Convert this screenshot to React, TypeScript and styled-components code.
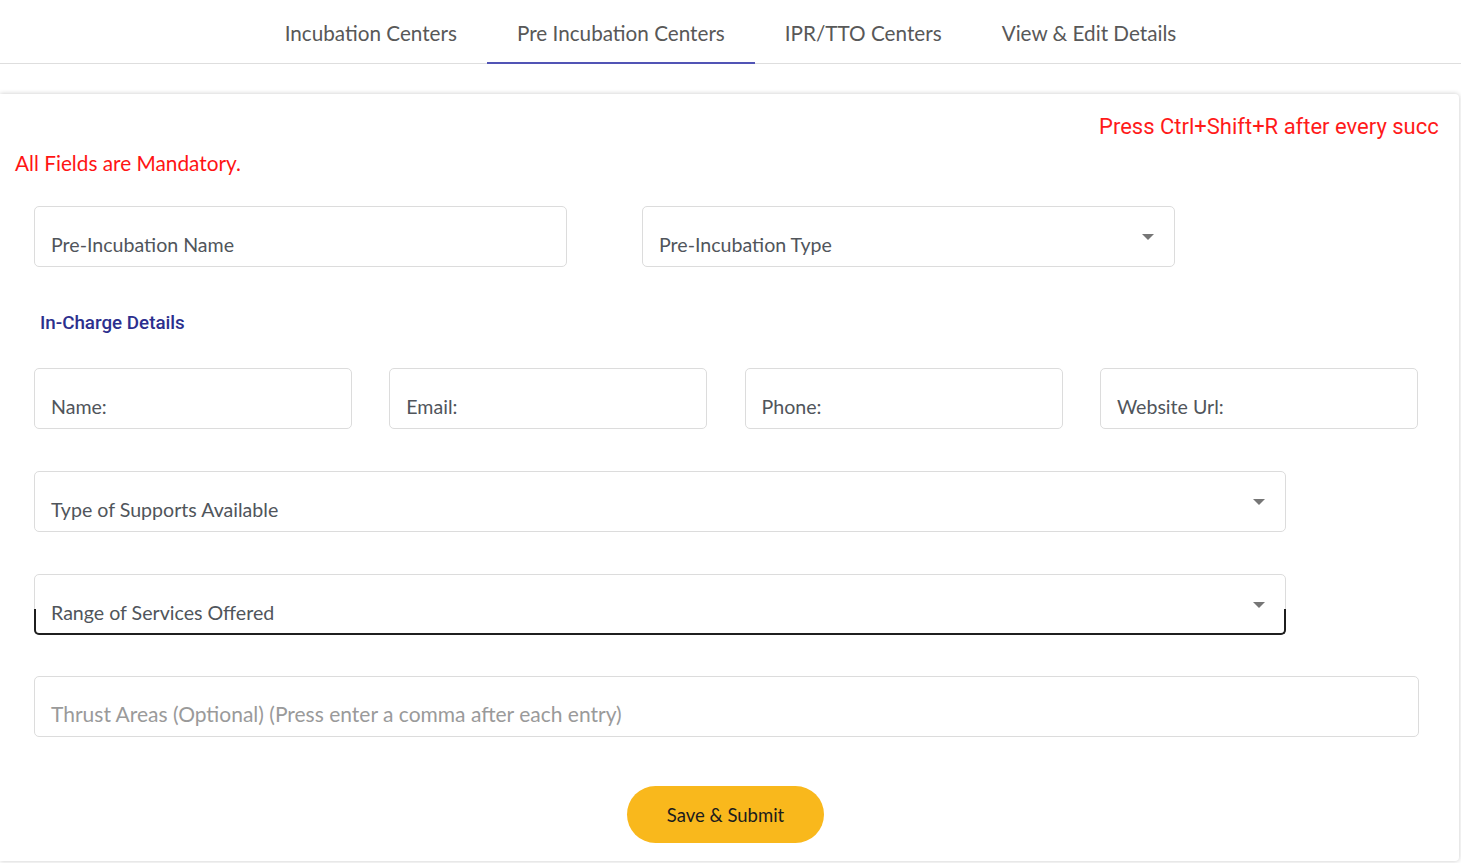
import styled, { createGlobalStyle, css } from "styled-components"

const GlobalStyle = createGlobalStyle`
    body {
        margin : 0;
        background : #ffffff;
        font-family : Lato, "Open Sans", sans-serif;
    }
`

const Page = styled.div`
    display : flex;
    flex-direction : column;
    width : 1461px;
`

const TabBar = styled.nav`
    display : flex;
    justify-content : center;
    height : 63px;
    border-bottom : 1px solid #dedede;
`

const Tab = styled.div<{ active?: boolean }>`
    display : flex;
    align-items : center;
    padding : 3px 30px 0;
    font-size : 20.7px;
    color : #585858;
    border-bottom : 2px solid ${(p) => (p.active ? "#5154b5" : "transparent")};
    margin-bottom : -1px;
`

const Card = styled.section`
    margin : 30px 2px 2px 0;
    padding : 15px 20px 18px 15px;
    border-radius : 0 4px 4px 0;
    box-shadow : 0 0 5px rgba(0, 0, 0, 0.22);
    display : flex;
    flex-direction : column;
`

const Notice = styled.div`
    display : flex;
    justify-content : flex-start;
    overflow : hidden;
    white-space : nowrap;
    padding-left : 1084px;
    padding-top : 2px;
    font-family : Roboto, sans-serif;
    font-size : 22px;
    color : #ff1a1a;
    height : 32px;
    line-height : 32px;
`

const Mandatory = styled.div`
    color : #ff1414;
    font-size : 20.8px;
    margin-top : 3px;
    height : 34px;
    line-height : 34px;
`

const Form = styled.form`
    display : flex;
    flex-direction : column;
    padding-left : 19px;
`

const Row = styled.div<{ cols: string; gap: number; top: number }>`
    display : grid;
    grid-template-columns : ${(p) => p.cols};
    column-gap : ${(p) => p.gap}px;
    margin-top : ${(p) => p.top}px;
`

const Field = styled.div<{ focused?: boolean }>`
    position : relative;
    height : 61px;
    box-sizing : border-box;
    border : 1px solid #dcdcdc;
    border-radius : 5px;
    display : flex;
    align-items : flex-end;
    padding : 0 16px 10px;
    ${(p) =>
        p.focused &&
        css`
            &::after {
                content : "";
                position : absolute;
                left : -1px;
                right : -1px;
                bottom : -1px;
                height : 24px;
                border : 2px solid #1f1f1f;
                border-top : none;
                border-radius : 0 0 5px 5px;
            }
        `}
`

const Label = styled.span<{ muted?: boolean }>`
    font-size : ${(p) => (p.muted ? "21px" : "19.6px")};
    color : ${(p) => (p.muted ? "#9a9a9a" : "#50555b")};
`

const Caret = styled.span`
    position : absolute;
    right : 20px;
    top : 27px;
    width : 0;
    height : 0;
    border-left : 6px solid transparent;
    border-right : 6px solid transparent;
    border-top : 6px solid #767676;
`

const SectionTitle = styled.h3`
    margin : 45px 0 0 6px;
    font-family : Roboto, sans-serif;
    font-weight : 500;
    font-size : 18.8px;
    color : #2c2f8e;
    height : 22px;
    line-height : 22px;
`

const Actions = styled.div`
    display : flex;
    justify-content : center;
    margin-top : 49px;
`

const SubmitButton = styled.button`
    width : 197px;
    height : 57px;
    border : none;
    border-radius : 29px;
    background : #f9b81c;
    color : #1c1c1c;
    font-family : Lato, sans-serif;
    font-size : 18.5px;
    margin-right : 22px;
`

const tabs = ["Incubation Centers", "Pre Incubation Centers", "IPR/TTO Centers", "View & Edit Details"]
const inCharge = ["Name:", "Email:", "Phone:", "Website Url:"]

export default function App() {
    return (
        <Page>
            <GlobalStyle />
            <TabBar>
                {tabs.map((t) => (
                    <Tab key={t} active={t === "Pre Incubation Centers"}>{t}</Tab>
                ))}
            </TabBar>

            <Card>
                <Notice>Press Ctrl+Shift+R after every successful submission to refresh the page.</Notice>
                <Mandatory>All Fields are Mandatory.</Mandatory>

                <Form>
                    <Row cols="533px 533px" gap={75} top={26}>
                        <Field><Label>Pre-Incubation Name</Label></Field>
                        <Field><Label>Pre-Incubation Type</Label><Caret /></Field>
                    </Row>

                    <SectionTitle>In-Charge Details</SectionTitle>

                    <Row cols="repeat(4, 318px)" gap={37.3} top={34}>
                        {inCharge.map((l) => (
                            <Field key={l}><Label>{l}</Label></Field>
                        ))}
                    </Row>

                    <Row cols="1252px" gap={0} top={42}>
                        <Field><Label>Type of Supports Available</Label><Caret /></Field>
                    </Row>

                    <Row cols="1252px" gap={0} top={42}>
                        <Field focused><Label>Range of Services Offered</Label><Caret /></Field>
                    </Row>

                    <Row cols="1385px" gap={0} top={41}>
                        <Field><Label muted>Thrust Areas (Optional) (Press enter a comma after each entry)</Label></Field>
                    </Row>

                    <Actions>
                        <SubmitButton type="button">Save &amp; Submit</SubmitButton>
                    </Actions>
                </Form>
            </Card>
        </Page>
    )
}
